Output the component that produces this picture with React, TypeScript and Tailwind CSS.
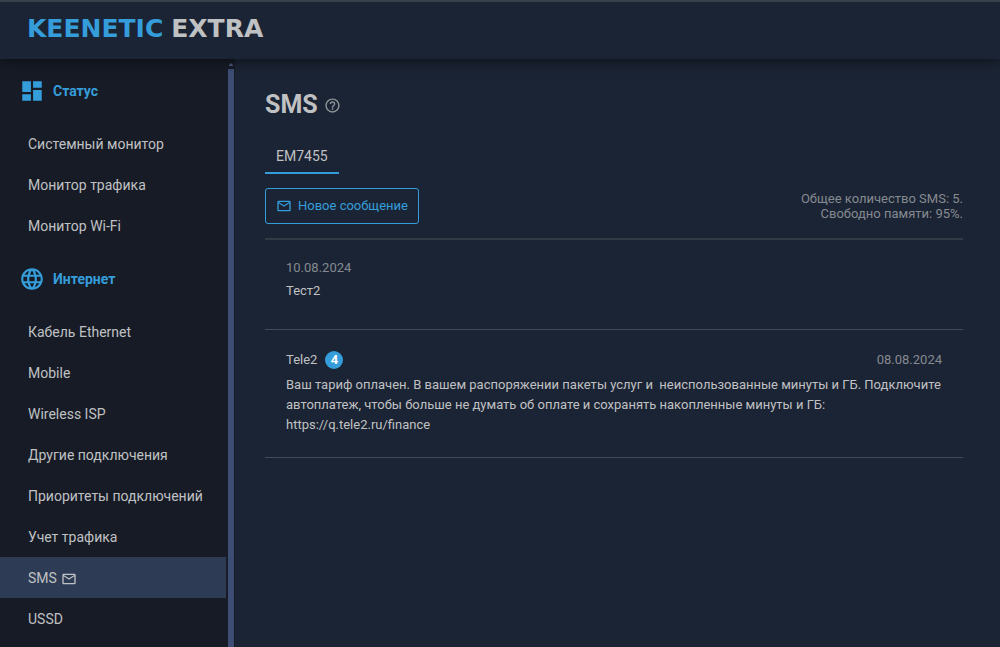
import clsx from "clsx";
import type { ReactNode } from "react";
import { MdDashboard, MdHelpOutline, MdLanguage, MdMailOutline } from "react-icons/md";

type NavItem = {
  readonly label: string;
  readonly active?: boolean;
  readonly hasMail?: boolean;
};

type Message = {
  readonly sender?: string;
  readonly count?: number;
  readonly date: string;
  readonly text: string;
};

const statusItems: NavItem[] = [
  { label: "Системный монитор" },
  { label: "Монитор трафика" },
  { label: "Монитор Wi-Fi" },
];

const internetItems: NavItem[] = [
  { label: "Кабель Ethernet" },
  { label: "Mobile" },
  { label: "Wireless ISP" },
  { label: "Другие подключения" },
  { label: "Приоритеты подключений" },
  { label: "Учет трафика" },
  { label: "SMS", active: true, hasMail: true },
  { label: "USSD" },
];

const messages: Message[] = [
  { date: "10.08.2024", text: "Тест2" },
  {
    sender: "Tele2",
    count: 4,
    date: "08.08.2024",
    text: "Ваш тариф оплачен. В вашем распоряжении пакеты услуг и  неиспользованные минуты и ГБ. Подключите автоплатеж, чтобы больше не думать об оплате и сохранять накопленные минуты и ГБ: https://q.tele2.ru/finance",
  },
];

function NavSection({ title, icon, items }: { title: string; icon: ReactNode; items: NavItem[] }) {
  return (
    <section>
      <h2 className="flex h-16 items-center gap-2 pl-[19px] font-bold text-[#369ddb]">
        {icon}
        {title}
      </h2>
      <ul>
        {items.map((item) => (
          <li key={item.label}>
            <a
              href="#"
              aria-current={item.active ? "page" : undefined}
              className={clsx("flex h-[41px] items-center gap-1 pl-7 whitespace-nowrap", item.active && "bg-[#2d3b55]")}
            >
              {item.label}
              {item.hasMail ? <MdMailOutline className="mt-0.5 size-4" aria-hidden /> : null}
            </a>
          </li>
        ))}
      </ul>
    </section>
  );
}

function MessageRow({ message }: { message: Message }) {
  return (
    <li className="min-h-[90px] border-b border-[#414a56] px-[21px] pt-5 pb-[22px]">
      <div className={clsx("flex items-center gap-2", message.sender ? "h-5" : "h-4")}>
        {message.sender ? <span>{message.sender}</span> : null}
        {message.count ? (
          <span className="flex size-[18px] items-center justify-center rounded-full bg-[#369ddb] font-bold text-white">
            {message.count}
          </span>
        ) : null}
        <time className={clsx("text-[#858a90]", message.sender && "ml-auto")}>{message.date}</time>
      </div>
      <p className="mt-[5px] leading-5 whitespace-pre-wrap">{message.text}</p>
    </li>
  );
}

export default function App() {
  return (
    <div className="flex h-screen flex-col overflow-hidden bg-[#1b2434] font-[Roboto,sans-serif] text-sm text-[#c0c1c3]">
      <header className="z-10 flex h-[59px] shrink-0 items-center border-t-2 border-[#35424c] bg-[#1b2434] px-[27px] pb-1 shadow-[0_2px_12px_rgba(0,0,0,0.5)]">
        <a href="#" className="flex gap-2 font-['DejaVu_Sans',sans-serif] text-[25px] leading-7 font-bold">
          <span className="text-[#369ddb]">KEENETIC</span>
          <span>EXTRA</span>
        </a>
      </header>

      <div className="flex min-h-0 flex-1">
        <aside className="flex w-[235px] shrink-0 gap-0.5 bg-[#161b26]">
          <nav className="flex flex-1 flex-col gap-px overflow-hidden">
            <NavSection title="Статус" icon={<MdDashboard className="size-[26px]" aria-hidden />} items={statusItems} />
            <NavSection title="Интернет" icon={<MdLanguage className="size-[26px]" aria-hidden />} items={internetItems} />
          </nav>
          <div className="mr-px flex w-1.5 flex-col items-center">
            <svg viewBox="0 0 6 10" className="h-2.5 w-1.5 shrink-0" aria-hidden>
              <path d="M0.5 7 L3 4 L5.5 7 Z" fill="#4a5b85" />
            </svg>
            <div className="w-full flex-1 bg-[#3d4d73]" />
          </div>
        </aside>

        <main className="min-w-0 flex-1 overflow-hidden pt-[30px] pr-[37px] pl-[30px]">
          <div className="flex h-8 items-center gap-1.5">
            <h1 className="text-[25px] leading-8 font-bold">SMS</h1>
            <button type="button" aria-label="Справка" className="text-[#90959a]">
              <MdHelpOutline className="size-[17px]" />
            </button>
          </div>

          <div role="tablist" className="mt-[19px] flex">
            <button type="button" role="tab" aria-selected="true" className="h-[34px] border-b-2 border-[#369ddb] px-[11px]">
              EM7455
            </button>
          </div>

          <div className="text-[13px]">
            <div className="mt-3.5 flex items-center justify-between border-b-2 border-[#323a46] pb-3.5">
              <button
                type="button"
                className="flex h-9 items-center gap-1.5 rounded-[3px] border border-[#369ddb] px-2.5 text-[#369ddb]"
              >
                <MdMailOutline className="size-4" aria-hidden />
                Новое сообщение
              </button>
              <p className="text-right leading-[15px] text-[#858a90]">
                Общее количество SMS: 5.
                <br />
                Свободно памяти: 95%.
              </p>
            </div>

            <ul>
              {messages.map((message) => (
                <MessageRow key={message.date} message={message} />
              ))}
            </ul>
          </div>
        </main>
      </div>
    </div>
  );
}
